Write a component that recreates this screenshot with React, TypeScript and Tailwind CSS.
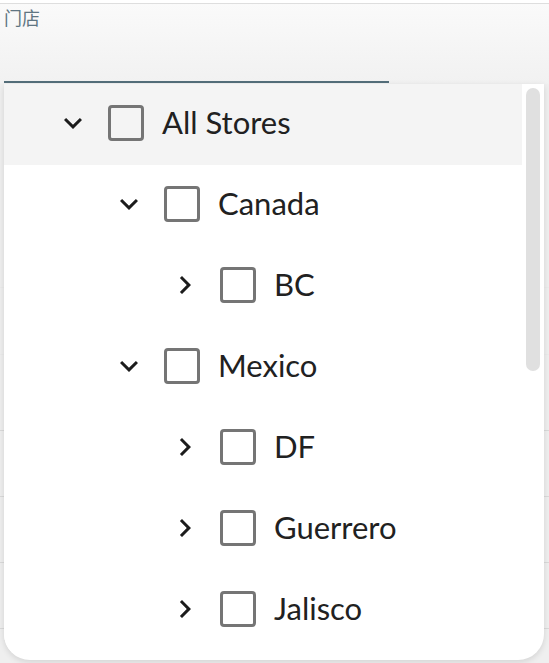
import { MdExpandMore, MdChevronRight } from 'react-icons/md'

type Node = { label: string; level: number; open: boolean; hover?: boolean }

const nodes: Node[] = [
  { label: 'All Stores', level: 0, open: true, hover: true },
  { label: 'Canada', level: 1, open: true },
  { label: 'BC', level: 2, open: false },
  { label: 'Mexico', level: 1, open: true },
  { label: 'DF', level: 2, open: false },
  { label: 'Guerrero', level: 2, open: false },
  { label: 'Jalisco', level: 2, open: false },
]

const indent = ['pl-[51px]', 'pl-[107px]', 'pl-[163px]']

function TreeRow({ node }: { node: Node }) {
  return (
    <div
      className={`flex h-[81px] shrink-0 items-center pb-[4px] ${indent[node.level]} ${
        node.hover ? 'bg-[#f4f4f4]' : 'bg-white'
      }`}
    >
      <span className="flex h-9 w-9 items-center justify-center text-[#1c1c1c]">
        {node.open ? <MdExpandMore size={38} /> : <MdChevronRight size={38} />}
      </span>
      <span className="ml-[17px] h-9 w-9 rounded-[4px] border-[3px] border-[#757575]" />
      <span className="ml-[18px] text-[31px] leading-none text-[#212121]">{node.label}</span>
    </div>
  )
}

export default function App() {
  return (
    <div
      className="relative h-[663px] w-[549px] overflow-hidden bg-[#efefef]"
      style={{ fontFamily: 'Lato, "Noto Sans", sans-serif' }}
    >
      {/* form field behind the dropdown */}
      <div className="h-[3px] bg-white" />
      <div className="h-px bg-[#dedede]" />
      <div className="relative h-[80px] bg-gradient-to-b from-[#fafafa] to-[#f1f1f1]">
        <div
          className="pl-1 pt-[1px] text-[18px] leading-6 text-[#5f7582]"
          style={{ fontFamily: '"Noto Sans CJK SC", "Noto Sans", sans-serif' }}
        >
          门店
        </div>
        <div className="absolute bottom-[1px] left-1 h-[2px] w-[385px] bg-[#546e7a]" />
      </div>

      {/* table rows behind */}
      <div className="flex flex-col">
        <div className="h-[204px] border-b border-[#ebebeb]" />
        <div className="h-[67px] border-b border-[#ebebeb]" />
        <div className="h-[76px] border-b border-[#dadada]" />
        <div className="h-[66px] border-b border-[#dadada]" />
        <div className="h-[66px] border-b border-[#dadada]" />
        <div className="h-[66px] border-b border-[#dadada]" />
      </div>

      {/* dropdown panel */}
      <div className="absolute left-1 top-[84px] flex h-[576px] w-[540px] overflow-hidden rounded-b-[26px] bg-white shadow-[0_2px_6px_rgba(0,0,0,0.12)]">
        <div className="flex w-[518px] flex-col">
          {nodes.map((n) => (
            <TreeRow key={n.label} node={n} />
          ))}
        </div>
        <div className="flex flex-1 justify-center pt-1">
          <div className="h-[283px] w-[14px] rounded-full bg-[#e0e0e0]" />
        </div>
      </div>
    </div>
  )
}
